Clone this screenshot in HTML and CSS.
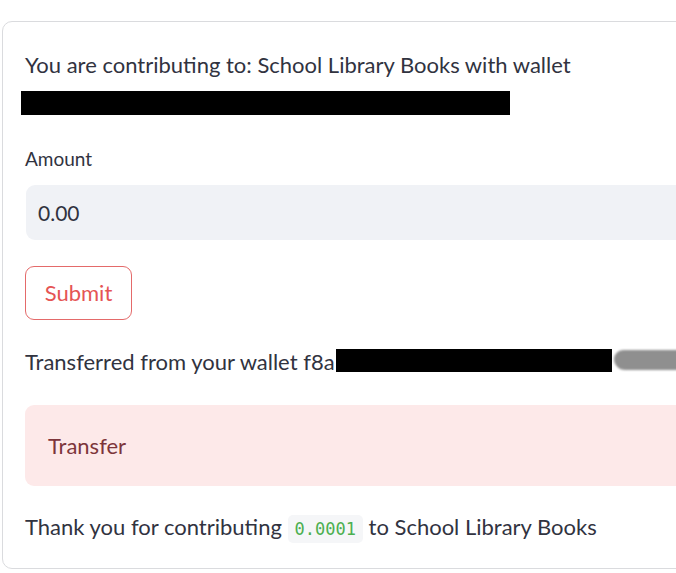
FILE: index.html
```html
<!DOCTYPE html>
<html>
<head>
<meta charset="utf-8">
<link rel="stylesheet" href="styles.css">
</head>
<body>
<div class="card">
  <p class="line title">You are contributing to: School Library Books with wallet</p>
  <div class="redact-wide"></div>
  <label class="label">Amount</label>
  <div class="input">0.00</div>
  <div class="btn-row"><button class="btn">Submit</button></div>
  <div class="line transfer-row"><span>Transferred from your wallet f8a</span><span class="redact-inline"></span><span class="blob"></span></div>
  <div class="alert">Transfer</div>
  <p class="line thanks">Thank you for contributing <code class="code">0.0001</code> to School Library Books</p>
</div>
</body>
</html>
```
FILE: styles.css
```css
html, body {
  margin: 0;
  padding: 0;
  background: #ffffff;
}
body {
  font-family: "Lato", "Noto Sans", sans-serif;
  color: #31333f;
  overflow: hidden;
}
.card {
  margin: 21px 0 0 2px;
  width: 720px;
  height: 548px;
  box-sizing: border-box;
  border: 1px solid #dadbde;
  border-radius: 10px;
  padding: 0 0 0 22px;
  display: flex;
  flex-direction: column;
  align-items: flex-start;
}
.line {
  margin: 0;
  font-size: 22px;
  line-height: 30px;
  white-space: nowrap;
}
.title {
  margin-top: 28px;
}
.redact-wide {
  margin: 11px 0 0 -4px;
  width: 489px;
  height: 24px;
  background: #000;
}
.label {
  margin-top: 32px;
  font-size: 19px;
  line-height: 24px;
}
.input {
  margin: 14px 0 0 1px;
  width: 680px;
  height: 55px;
  box-sizing: border-box;
  background: #f0f2f6;
  border-radius: 9px;
  padding-left: 12px;
  font-size: 21px;
  line-height: 55px;
}
.btn-row {
  margin-top: 26px;
}
.btn {
  width: 107px;
  height: 54px;
  box-sizing: border-box;
  border: 1.5px solid #e46a6a;
  border-radius: 9px;
  background: #fff;
  color: #e55454;
  font-family: inherit;
  font-size: 22px;
  padding: 0 0 2px 0;
}
.transfer-row {
  margin-top: 28px;
  display: flex;
  align-items: center;
  height: 27px;
}
.redact-inline {
  display: block;
  width: 276px;
  height: 23px;
  background: #000;
  margin-left: 1px;
  margin-top: -2px;
}
.blob {
  display: block;
  width: 72px;
  height: 20px;
  background: #8f8f8f;
  border-radius: 10px 3px 8px 12px;
  margin-left: 2px;
  margin-top: -3px;
  filter: blur(0.8px);
}
.alert {
  margin-top: 30px;
  width: 680px;
  height: 81px;
  box-sizing: border-box;
  background: #fde9e9;
  border-radius: 9px;
  padding-left: 23px;
  color: #7d353b;
  font-size: 22px;
  line-height: 81px;
}
.thanks {
  margin-top: 26px;
}
.code {
  font-family: "DejaVu Sans Mono", monospace;
  font-size: 17px;
  color: #4caf50;
  background: #f5f6f8;
  border-radius: 5px;
  padding: 4px 7px;
}
```
